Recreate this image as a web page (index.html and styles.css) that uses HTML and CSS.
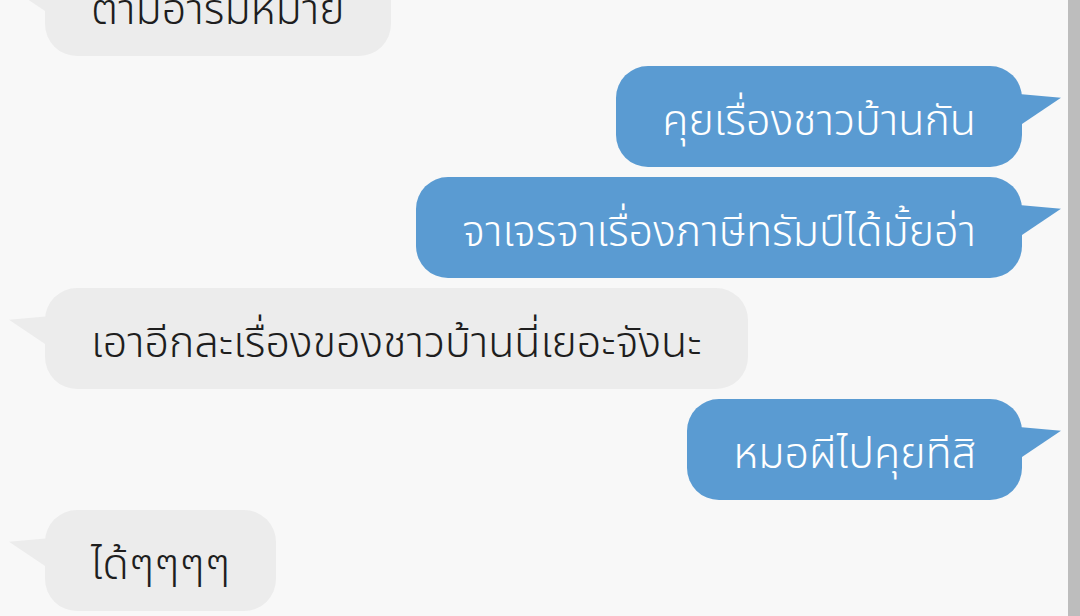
FILE: index.html
```html
<!DOCTYPE html>
<html>
<head>
    <title>Chat</title>
    <link rel="stylesheet" href="styles.css">
</head>
<body>
    <div class="screen">
        <div class="chat">
            <div class="bubble in">ตามอารมหมาย</div>
            <div class="bubble out">คุยเรื่องชาวบ้านกัน</div>
            <div class="bubble out">จาเจรจาเรื่องภาษีทรัมป์ได้มั้ยอ่า</div>
            <div class="bubble in">เอาอีกละเรื่องของชาวบ้านนี่เยอะจังนะ</div>
            <div class="bubble out">หมอผีไปคุยทีสิ</div>
            <div class="bubble in">ได้ๆๆๆๆ</div>
        </div>
        <div class="scrollbar"></div>
    </div>
</body>
</html>
```

FILE: styles.css
```css
body {
    margin: 0;
    background: #f8f8f8;
    font-family: "Noto Sans Thai", "Noto Sans", "DejaVu Sans", sans-serif;
    overflow: hidden;
}
.screen {
    display: flex;
    height: 616px;
    overflow: hidden;
}
.chat {
    flex: 1;
    display: flex;
    flex-direction: column;
    gap: 10px;
    margin-top: -45px;
}
.scrollbar {
    width: 12px;
    background: #bdbdbd;
}
.bubble {
    position: relative;
    height: 101px;
    box-sizing: border-box;
    padding: 10px 46px 0;
    display: flex;
    align-items: center;
    border-radius: 32px;
    font-size: 43px;
    font-weight: 300;
    white-space: nowrap;
}
.bubble.in {
    align-self: flex-start;
    margin-left: 45px;
    background: #ececec;
    color: #1e1e1e;
}
.bubble.out {
    align-self: flex-end;
    margin-right: 46px;
    background: #5a9bd2;
    color: #fff;
}
.bubble::after {
    content: "";
    position: absolute;
    top: 28px;
    width: 42px;
    height: 32px;
}
.bubble.out::after {
    right: -39px;
    background: #5a9bd2;
    clip-path: polygon(0 0, 100% 12%, 0 100%);
}
.bubble.in::after {
    left: -36px;
    background: #ececec;
    clip-path: polygon(100% 0, 0 12%, 100% 100%);
}
```
